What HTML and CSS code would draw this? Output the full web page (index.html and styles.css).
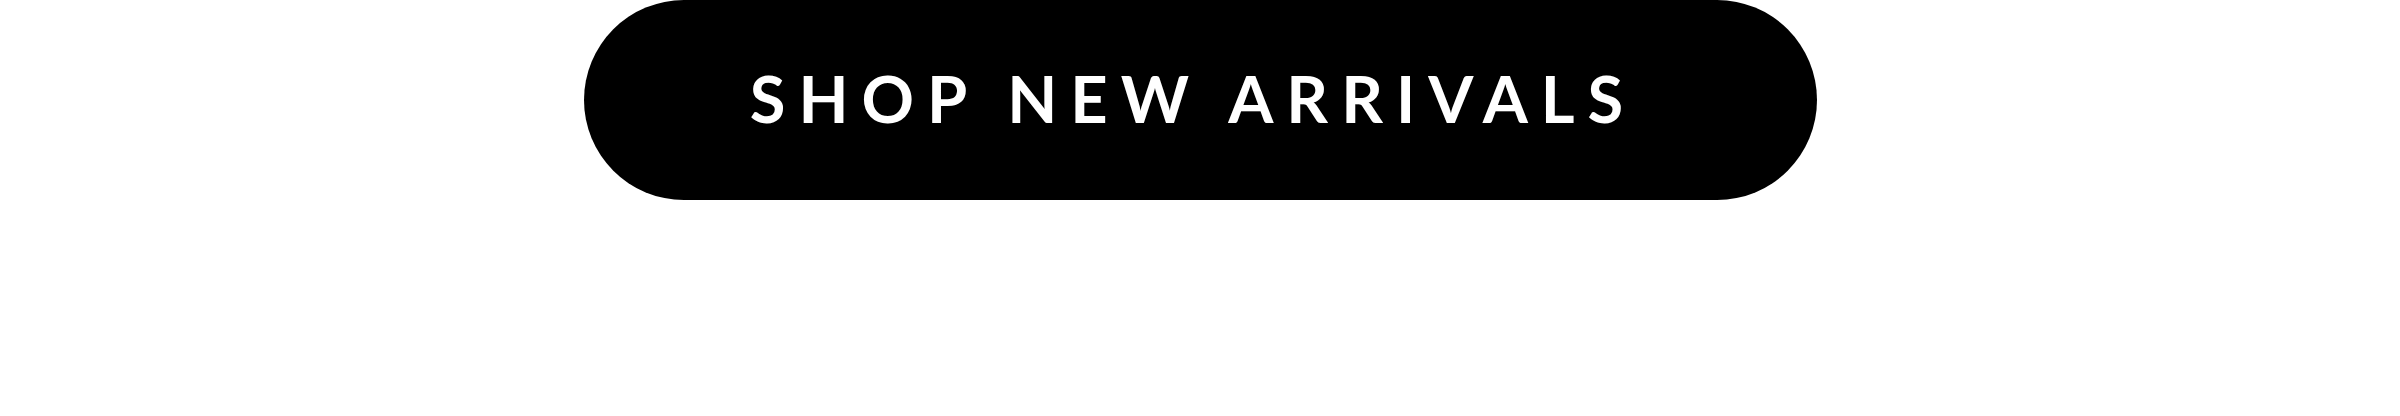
FILE: index.html
```html
<!DOCTYPE html>
<html lang="en">
<head>
  <meta charset="UTF-8" />
  <title>Shop New Arrivals</title>
  <link rel="stylesheet" href="styles.css">
</head>
<body>
  <div class="cta">
    <a class="cta-button" href="#">Shop New Arrivals</a>
  </div>
</body>
</html>
```

FILE: styles.css
```css
body {
  margin: 0;
  background: #fff;
  font-family: Lato, 'Liberation Sans', sans-serif;
}
.cta {
  display: flex;
  justify-content: center;
}
.cta-button {
  display: flex;
  align-items: center;
  justify-content: center;
  width: 1233px;
  height: 200px;
  box-sizing: border-box;
  padding: 0 14px 5px 0;
  background: #000;
  color: #fff;
  border-radius: 100px;
  text-decoration: none;
  text-transform: uppercase;
  font-size: 65px;
  font-weight: 700;
  letter-spacing: 13px;
}
```
